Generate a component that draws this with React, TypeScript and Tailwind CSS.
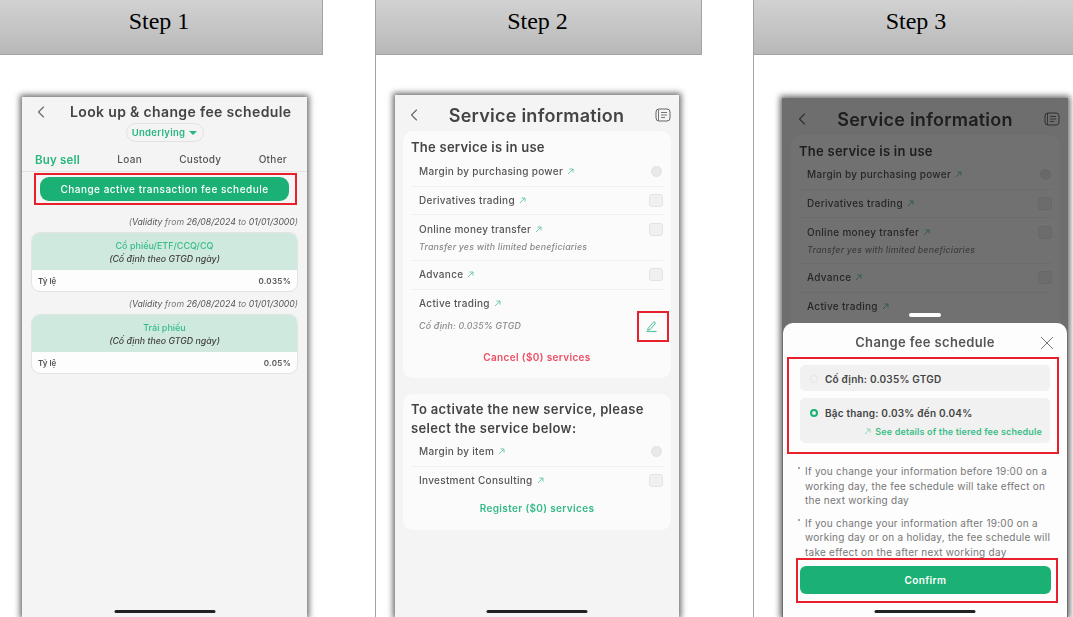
import React from "react";

const font = { fontFamily: "Inter, 'Noto Sans', sans-serif" };

function Chevron({ className = "" }: { className?: string }) {
  return (
    <svg width="8" height="12" viewBox="0 0 8 12" fill="none" className={className}>
      <path d="M6.5 1 L1.5 6 L6.5 11" stroke="currentColor" strokeWidth="1.1" strokeLinecap="round" strokeLinejoin="round" />
    </svg>
  );
}

function Arrow({ className = "text-[#5fc79d]" }: { className?: string }) {
  return (
    <svg width="7" height="7" viewBox="0 0 7 7" fill="none" className={className}>
      <path d="M1 6 L6 1 M2.4 1 H6 V4.6" stroke="currentColor" strokeWidth="0.9" />
    </svg>
  );
}

function DocIcon() {
  return (
    <svg width="16" height="14" viewBox="0 0 16 14" fill="none" className="text-[#666]">
      <rect x="1" y="1" width="14" height="12" rx="3" stroke="currentColor" strokeWidth="1" />
      <path d="M3.5 1.5 V12.5 M6 4.5 H12 M6 7 H12 M6 9.5 H10" stroke="currentColor" strokeWidth="0.9" />
    </svg>
  );
}

function Header({ label, className }: { label: string; className: string }) {
  return (
    <div
      className={`h-[55px] shrink-0 bg-gradient-to-b from-[#d2d2d2] to-[#b8b8b8] border-b border-r border-[#a3a3a3] text-center text-[24px] leading-[43px] text-black ${className}`}
      style={{ fontFamily: "'Liberation Serif', serif" }}
    >
      {label}
    </div>
  );
}

function HomeBar() {
  return <div className="absolute bottom-[4px] left-1/2 -translate-x-1/2 w-[101px] h-[3px] rounded-full bg-[#222]" />;
}

function Phone({ className, children }: { className: string; children: React.ReactNode }) {
  return (
    <div
      className={`relative bg-[#f4f4f4] shadow-[0_0_6px_2px_rgba(0,0,0,0.6)] overflow-hidden blur-[0.35px] text-[#444] ${className}`}
      style={font}
    >
      {children}
    </div>
  );
}

function Tab({ label, active }: { label: string; active?: boolean }) {
  return (
    <div className={active ? "relative pt-[4px] text-[11.5px] font-semibold text-[#27b67e] tracking-[0.2px]" : "relative text-[10px] font-medium text-[#555] tracking-[0.3px]"}>
      {label}
      {active && <div className="absolute left-[13px] -bottom-[5px] w-[19px] h-[2px] bg-[#1bb174] rounded-full" />}
    </div>
  );
}

function FeeCard({ title, rate }: { title: string; rate: string }) {
  return (
    <div className="rounded-[9px] border border-[#e3e3e3] overflow-hidden bg-[#fdfdfd]">
      <div className="h-[37px] bg-[#cfe9de] flex flex-col items-center justify-center gap-[2px]">
        <div className="text-[9px] leading-[11px] font-medium text-[#36bd87]">{title}</div>
        <div className="text-[8.8px] leading-[11px] italic font-medium text-[#444]">(Cố định theo GTGD ngày)</div>
      </div>
      <div className="h-[21px] flex items-center justify-between px-[6px] text-[8px] font-semibold text-[#555]">
        <span>Tỷ lệ</span>
        <span className="tracking-[0.3px]">{rate}</span>
      </div>
    </div>
  );
}

function Validity() {
  return (
    <div className="text-right text-[8.7px] leading-[11px] italic text-[#777] mb-[4px]">
      (<span className="text-[#555]">Validity</span> from <span className="text-[#555]">26/08/2024</span> to <span className="text-[#555]">01/01/3000</span>)
    </div>
  );
}

function Step1() {
  return (
    <Phone className="ml-[22px] mt-[42px] w-[285px] h-[520px]">
      <div className="flex items-center h-[26px] pl-[15px] pt-[3px]">
        <Chevron className="text-[#666]" />
        <div className="ml-[25px] text-[14px] font-semibold tracking-[0.35px] text-[#444] whitespace-nowrap">Look up &amp; change fee schedule</div>
      </div>
      <div className="flex justify-center">
        <div className="h-[19px] w-[78px] rounded-full border border-[#e2e2e2] flex items-center justify-center gap-[4px] pt-[1px] text-[9.5px] font-semibold text-[#27b67e] tracking-[0.3px]">
          Underlying
          <span className="w-0 h-0 border-x-[4px] border-x-transparent border-t-[4px] border-t-[#27b67e]" />
        </div>
      </div>
      <div className="flex items-center justify-between pl-[13px] pr-[20px] h-[30px] pt-[5px] border-b border-[#e2e2e2]">
        <Tab label="Buy sell" active />
        <Tab label="Loan" />
        <Tab label="Custody" />
        <Tab label="Other" />
      </div>
      <div className="mx-[18px] mt-[5px] h-[24px] rounded-[9px] bg-[#1bb174] flex items-center justify-center text-[10px] font-medium text-white tracking-[0.5px] whitespace-nowrap">
        Change active transaction fee schedule
      </div>
      <div className="mx-[9px] mt-[16px]">
        <Validity />
        <FeeCard title="Cổ phiếu/ETF/CCQ/CQ" rate="0.035%" />
        <div className="h-[7px]" />
        <Validity />
        <FeeCard title="Trái phiếu" rate="0.05%" />
      </div>
      <HomeBar />
    </Phone>
  );
}

function Row({ label, shape, sub, last }: { label: string; shape?: "circle" | "box"; sub?: React.ReactNode; last?: boolean }) {
  return (
    <div className={`pl-[8px] ${last ? "" : "border-b border-[#f0f0f0]"}`}>
      <div className="flex items-center justify-between h-[27.7px]">
        <div className="flex items-center gap-[4px] text-[10px] font-medium tracking-[0.3px] text-[#555] whitespace-nowrap">
          {label}
          <Arrow />
        </div>
        {shape === "circle" && <div className="w-[11px] h-[11px] rounded-full bg-[#e9e9e9] border border-[#e2e2e2] mr-[1px]" />}
        {shape === "box" && <div className="w-[14px] h-[13px] rounded-[3px] bg-[#f0f0f0] border border-[#e4e4e4]" />}
      </div>
      {sub}
    </div>
  );
}

function SubText({ children }: { children: React.ReactNode }) {
  return <div className="text-[8.8px] leading-[10px] italic font-medium text-[#8a8a8a] tracking-[0.2px] -mt-[1px]">{children}</div>;
}

/* In step 3 the sheet covers everything below "Active trading", so only the visible part is drawn. */
function Service({ covered }: { covered: boolean }) {
  return (
    <>
      <div className="flex items-center h-[34px] pt-[2px] pl-[15px] pr-[8px] justify-between">
        <Chevron className="text-[#666]" />
        <div className="text-[18px] font-semibold tracking-[0.25px] text-[#444] whitespace-nowrap">Service information</div>
        <DocIcon />
      </div>
      <div className="mx-[8px] rounded-[10px] bg-[#fbfbfb] h-[247px] px-[8px] pt-[8px]">
        <div className={`text-[13px] leading-[17px] font-semibold tracking-[0.25px] text-[#444] ${covered ? "mb-[1px]" : "mb-[2px]"}`}>The service is in use</div>
        <Row label="Margin by purchasing power" shape="circle" />
        <Row label="Derivatives trading" shape="box" />
        <Row
          label="Online money transfer"
          shape="box"
          sub={<div className="pb-[8px]"><SubText>Transfer yes with limited beneficiaries</SubText></div>}
        />
        <Row label="Advance" shape="box" />
        <Row
          label="Active trading"
          last
          sub={
            covered ? undefined : (
              <div className="flex items-center justify-between h-[16px] mt-[1px] pr-[6px]">
                <SubText>Cố định: 0.035% GTGD</SubText>
                <svg width="11" height="11" viewBox="0 0 13 13" fill="none" className="text-[#27b67e]">
                  <path d="M2.8 8.4 L8.6 1.6 C9.2 1 10 1 10.6 1.5 C11.2 2 11.2 2.8 10.7 3.4 L4.9 10 L2.3 10.7 Z M1 12.3 H12" stroke="currentColor" strokeWidth="1" strokeLinejoin="round" strokeLinecap="round" />
                </svg>
              </div>
            )
          }
        />
        {!covered && <div className="text-center mt-[16px] text-[10px] font-semibold tracking-[0.35px] text-[#ef4d63]">Cancel ($0) services</div>}
      </div>
      {!covered && (
        <div className="mx-[8px] mt-[16px] rounded-[10px] bg-[#fbfbfb] h-[136px] px-[8px] pt-[6px]">
          <div className="text-[13px] leading-[19px] font-semibold tracking-[0.35px] text-[#444]">
            To activate the new service, please<br />select the service below:
          </div>
          <Row label="Margin by item" shape="circle" />
          <Row label="Investment Consulting" shape="box" last />
          <div className="text-center mt-[7px] text-[10px] font-semibold tracking-[0.35px] text-[#34ba85]">Register ($0) services</div>
        </div>
      )}
    </>
  );
}

function Step2() {
  return (
    <Phone className="ml-[19px] mt-[40px] w-[284px] h-[522px]">
      <div className="pt-[2px]">
        <Service covered={false} />
      </div>
      <HomeBar />
    </Phone>
  );
}

function Note({ children }: { children: React.ReactNode }) {
  return (
    <div className="flex text-[10px] leading-[14.5px] text-[#777] tracking-[0.25px]">
      <span className="w-[2px] h-[2px] rounded-full bg-[#888] shrink-0 mt-[3px] mr-[5px]" />
      <div>{children}</div>
    </div>
  );
}

function Step3() {
  return (
    <Phone className="ml-[28px] mt-[43px] w-[286px] h-[519px]">
      <div className="pt-[3px] pl-[1px]">
        <Service covered />
      </div>
      <div className="absolute inset-0 bg-black/55" />
      <div className="absolute left-1/2 -translate-x-1/2 top-[215px] w-[32px] h-[4px] rounded-full bg-white" />
      <div className="absolute left-[1px] right-[1px] top-[225px] bottom-0 bg-[#fdfdfd] rounded-t-[10px] px-[17px]">
        <div className="relative h-[39px] flex items-center justify-center text-[13px] font-semibold tracking-[0.35px] text-[#555]">
          Change fee schedule
          <svg width="14" height="14" viewBox="0 0 14 14" fill="none" className="absolute -right-[4px] top-[13px] text-[#777]">
            <path d="M1 1 L13 13 M13 1 L1 13" stroke="currentColor" strokeWidth="1" />
          </svg>
        </div>
        <div className="mt-[3px] h-[26px] rounded-[5px] bg-[#f1f1f1] flex items-center pl-[10px] gap-[7px] pt-[2px] text-[10px] font-semibold tracking-[0.2px] text-[#444]">
          <span className="w-[8px] h-[8px] rounded-full border border-[#e6e6e6]" />
          Cố định: 0.035% GTGD
        </div>
        <div className="mt-[7px] h-[45px] rounded-[5px] bg-[#f1f1f1] pl-[10px] pr-[8px] pt-[9px]">
          <div className="flex items-center gap-[7px] text-[10px] leading-[12px] font-semibold tracking-[0.2px] text-[#444]">
            <span className="w-[8px] h-[8px] rounded-full border-2 border-[#1bb174]" />
            Bậc thang: 0.03% đến 0.04%
          </div>
          <div className="flex items-center justify-end gap-[4px] mt-[7px] text-[9px] leading-[11px] font-semibold tracking-[0.15px] text-[#3bbd89]">
            <Arrow className="text-[#8fcfb5]" />
            See details of the tiered fee schedule
          </div>
        </div>
        <div className="mt-[21px] -ml-[2px] -mr-[8px] flex flex-col gap-[8px]">
          <Note>If you change your information before 19:00 on a<br />working day, the fee schedule will take effect on<br />the next working day</Note>
          <Note>If you change your information after 19:00 on a<br />working day or on a holiday, the fee schedule will<br />take effect on the after next working day</Note>
        </div>
        <div className="absolute left-[17px] right-[16px] bottom-[23px] h-[28px] rounded-[6px] bg-[#1bb174] flex items-center justify-center text-[10px] font-semibold tracking-[0.4px] text-white">
          Confirm
        </div>
      </div>
      <HomeBar />
    </Phone>
  );
}

function RedBox({ className }: { className: string }) {
  return <div className={`absolute border-2 border-[#e8202c] ${className}`} />;
}

export default function App() {
  return (
    <div className="relative w-[1073px] h-[617px] bg-white overflow-hidden flex">
      <section className="w-[323px] mr-[52px] flex flex-col">
        <Header label="Step 1" className="w-[323px] pr-[4px]" />
        <Step1 />
      </section>
      <section className="w-[327px] mr-[51px] flex flex-col border-l border-[#a3a3a3]">
        <Header label="Step 2" className="w-[326px] pr-[2px]" />
        <Step2 />
      </section>
      <section className="flex-1 flex flex-col border-l border-[#a3a3a3]">
        <Header label="Step 3" className="w-full border-r-0 pl-[5px]" />
        <Step3 />
      </section>
      <RedBox className="left-[34px] top-[173px] w-[263px] h-[32px]" />
      <RedBox className="left-[637px] top-[311px] w-[32px] h-[31px]" />
      <RedBox className="left-[787px] top-[357px] w-[272px] h-[97px]" />
      <RedBox className="left-[796px] top-[558px] w-[262px] h-[45px]" />
    </div>
  );
}
